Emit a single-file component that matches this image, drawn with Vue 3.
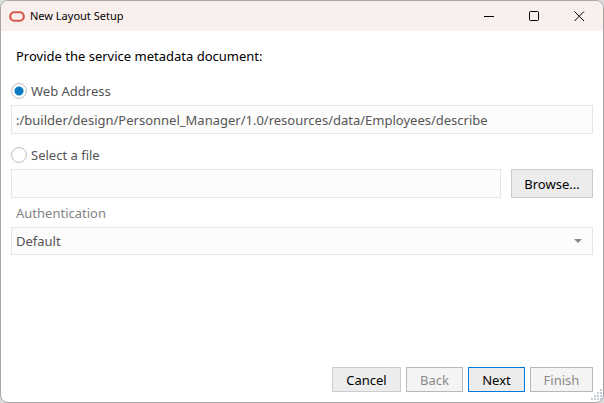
<script setup>
import { ref } from 'vue'

const source = ref('web')
const address = ref(':/builder/design/Personnel_Manager/1.0/resources/data/Employees/describe')
const file = ref('')
const authentication = ref('Default')

const gripDots = [
  [9, 0],
  [6, 3], [9, 3],
  [3, 6], [6, 6], [9, 6],
  [0, 9], [3, 9], [6, 9], [9, 9],
]
</script>

<template>
  <div class="desktop">
    <main class="window">
      <header class="titlebar">
        <svg class="logo" viewBox="0 0 16 11" aria-hidden="true">
          <rect x="1.25" y="1.25" width="13.5" height="8.5" rx="4" />
        </svg>
        <h1 class="title">New Layout Setup</h1>
        <div class="controls">
          <button class="control" type="button" aria-label="Minimize">
            <svg viewBox="0 0 11 11"><path d="M0 5.5H10" /></svg>
          </button>
          <button class="control" type="button" aria-label="Maximize">
            <svg viewBox="0 0 11 11"><rect x="0.5" y="0.5" width="9" height="9" rx="1" /></svg>
          </button>
          <button class="control" type="button" aria-label="Close">
            <svg viewBox="0 0 11 11"><path d="M0.5 0.5L10 10M10 0.5L0.5 10" /></svg>
          </button>
        </div>
      </header>

      <form class="form" @submit.prevent>
        <p class="intro">Provide the service metadata document:</p>

        <label class="choice">
          <input v-model="source" class="radio" type="radio" name="source" value="web" />
          <span>Web Address</span>
        </label>
        <input v-model="address" class="field" type="text" aria-label="Web Address" />

        <label class="choice">
          <input v-model="source" class="radio" type="radio" name="source" value="file" />
          <span>Select a file</span>
        </label>
        <div class="file-row">
          <input v-model="file" class="field" type="text" aria-label="Select a file" />
          <button class="button browse" type="button">Browse...</button>
        </div>

        <label class="caption" for="authentication">Authentication</label>
        <div class="select-box">
          <select id="authentication" v-model="authentication" class="field select">
            <option>Default</option>
          </select>
          <svg class="arrow" viewBox="0 0 8 4" aria-hidden="true"><path d="M0 0H8L4 4Z" /></svg>
        </div>

        <footer class="actions">
          <button class="button cancel" type="button">Cancel</button>
          <button class="button" type="button" disabled>Back</button>
          <button class="button next" type="submit">Next</button>
          <button class="button finish" type="button" disabled>Finish</button>
        </footer>
      </form>

      <svg class="grip" viewBox="0 0 11 11" aria-hidden="true">
        <rect v-for="([x, y], i) in gripDots" :key="i" :x="x" :y="y" width="2" height="2" />
      </svg>
    </main>
  </div>
</template>

<style>
body {
  margin: 0;
}
</style>

<style scoped>
.desktop {
  min-height: 100vh;
  display: flex;
  background: #dcdcdc;
  font-family: "Noto Sans", "Open Sans", sans-serif;
  font-size: 13px;
  line-height: 18px;
  color: #000;
}

.window {
  position: relative;
  flex: 1;
  box-sizing: border-box;
  display: flex;
  flex-direction: column;
  border: 1px solid #a8a6a6;
  border-radius: 8px;
  overflow: hidden;
  background: #fff;
}

.titlebar {
  display: flex;
  align-items: center;
  height: 30px;
  padding: 0 1px 0 8px;
  background: #f9f0ee;
}

.logo {
  width: 16px;
  height: 11px;
  fill: none;
  stroke: #d9594c;
  stroke-width: 2.2;
}

.title {
  flex: 1;
  margin: 0 0 0 5px;
  font-size: 11px;
  font-weight: 400;
}

.controls {
  display: flex;
}

.control {
  display: flex;
  align-items: center;
  justify-content: center;
  width: 45px;
  height: 30px;
  padding: 0;
  border: 0;
  background: none;
}

.control svg {
  width: 11px;
  height: 11px;
  fill: none;
  stroke: #000;
}

.form {
  flex: 1;
  display: flex;
  flex-direction: column;
  padding: 16px 10px 10px;
}

.intro {
  margin: 0 0 17px;
  padding-left: 5px;
}

.choice {
  display: flex;
  align-items: center;
  gap: 4px;
  height: 18px;
  margin-bottom: 5px;
  color: #555;
}

.radio {
  appearance: none;
  box-sizing: border-box;
  width: 16px;
  height: 16px;
  margin: 0;
  border: 1px solid #bfbfbf;
  border-radius: 50%;
  background: #fff;
}

.radio:checked {
  background: radial-gradient(circle, #0a7ac4 4px, #fff 5px);
}

.field {
  box-sizing: border-box;
  width: 100%;
  min-width: 0;
  height: 29px;
  margin: 0 0 12px;
  padding: 0 4px;
  border: 1px solid #e5e5e5;
  border-radius: 0;
  background: #fcfcfc;
  color: #555;
  font: inherit;
}

.file-row {
  display: flex;
  gap: 10px;
  margin-bottom: 6px;
}

.file-row .field {
  flex: 1;
  margin: 0;
}

.button {
  box-sizing: border-box;
  width: 57px;
  height: 25px;
  padding: 0;
  border: 1px solid #ccc;
  border-radius: 0;
  background: #ececec;
  color: #000;
  font: inherit;
}

.button:disabled {
  border-color: #b5b9bc;
  background: #f4f4f4;
  color: #8a8a8a;
}

.browse {
  width: 82px;
  height: 29px;
}

.caption {
  margin-bottom: 5px;
  padding-left: 5px;
  color: #838383;
}

.select-box {
  position: relative;
}

.select {
  display: block;
  height: 28px;
  margin: 0;
  appearance: none;
}

.arrow {
  position: absolute;
  top: 12px;
  right: 11px;
  width: 8px;
  height: 4px;
  fill: #8a8a8a;
  pointer-events: none;
}

.actions {
  display: flex;
  justify-content: flex-end;
  gap: 5px;
  margin-top: auto;
}

.cancel {
  width: 69px;
}

.next {
  border-color: #0078d7;
}

.finish {
  width: 63px;
}

.grip {
  position: absolute;
  right: 1px;
  bottom: 2px;
  width: 11px;
  height: 11px;
  fill: #c3ced8;
}
</style>
